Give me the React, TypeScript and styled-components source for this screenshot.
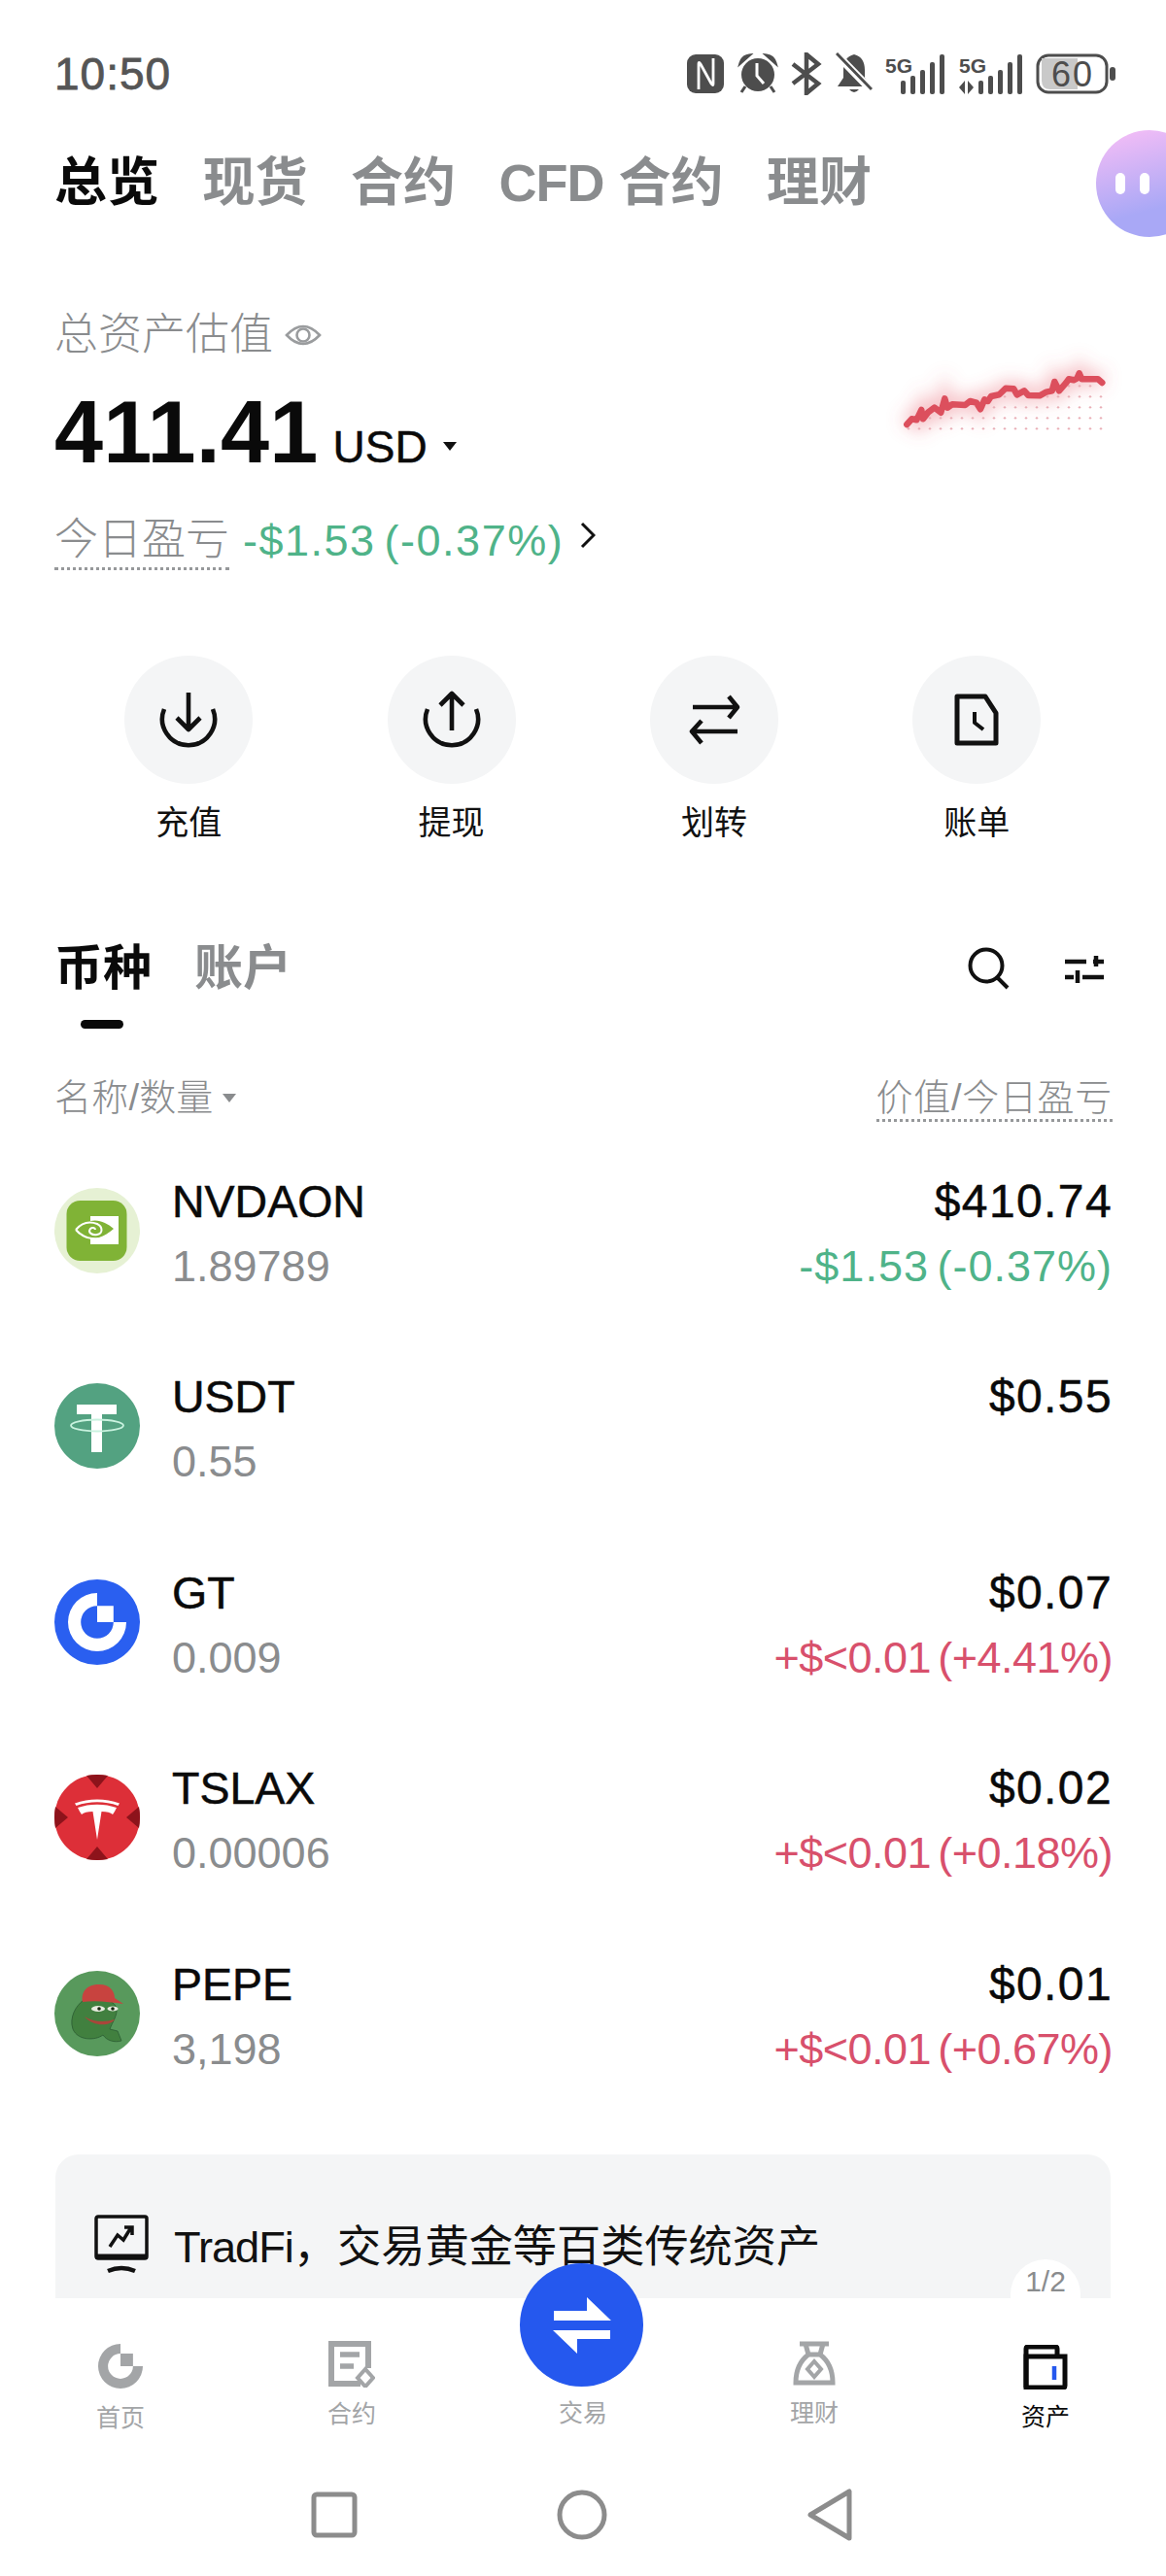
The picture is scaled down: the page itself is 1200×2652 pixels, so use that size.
import React from 'react';
import styled, { createGlobalStyle } from 'styled-components';

const FONT = '"Liberation Sans", "Noto Sans CJK SC", sans-serif';
const GRAY = '#8a8c8e';
const GREEN = '#4fb389';
const RED = '#d8506c';
const INK = '#0a0a0a';

const Global = createGlobalStyle`
  html, body { margin: 0; padding: 0; background: #fff; }
  body { font-family: ${FONT}; color: ${INK}; }
  * { box-sizing: border-box; }
`;

const Page = styled.div`
  width: 1200px; height: 2652px; overflow: hidden; position: relative;
  display: flex; flex-direction: column; background: #fff;
`;
const Scroll = styled.main`
  height: 2366px; overflow: hidden; position: relative;
  display: flex; flex-direction: column; flex: none;
`;

/* status bar */
const StatusBar = styled.div`
  height: 130px; padding: 22px 52px 0 56px; flex: none;
  display: flex; align-items: flex-start; justify-content: space-between;
`;
const Clock = styled.div`
  height: 108px; line-height: 108px; font-size: 46px; color: #555; letter-spacing: 1px;
  -webkit-text-stroke: 0.8px #555;
`;
const StatusIcons = styled.div`
  height: 108px; display: flex; align-items: center; gap: 13.5px; color: #4d4d4d;
`;

/* top tabs */
const TopTabs = styled.nav`
  height: 114px; flex: none; padding-left: 56px; position: relative;
  display: flex; align-items: center; gap: 44.5px;
`;
const TopTab = styled.div<{ $active?: boolean }>`
  font-size: 54px; font-weight: 700; line-height: 70px; white-space: nowrap; padding-top: 2px;
  color: ${p => (p.$active ? INK : GRAY)};
`;
const TabLatin = styled.span`
  letter-spacing: -1px;
`;
const Assistant = styled.div`
  position: absolute; left: 1128px; top: 4px; width: 110px; height: 110px; border-radius: 50%;
  background: linear-gradient(165deg, #f3bdf6 5%, #a9a8f6 70%);
  display: flex; align-items: center; padding-left: 20px; gap: 15px;
`;
const AssistantEye = styled.span`
  width: 10px; height: 22px; border-radius: 5px; background: #fff;
`;

/* summary */
const Summary = styled.section`
  margin-top: 60px; padding: 0 55px 0 56px; flex: none;
  display: flex; flex-direction: column;
`;
const LabelRow = styled.div`
  height: 78px; display: flex; align-items: center; gap: 12px; padding-top: 4px;
`;
const MutedLabel = styled.span`
  font-size: 45px; color: ${GRAY}; line-height: 60px; font-weight: 300;
`;
const AmountRow = styled.div`
  height: 126px; display: flex; justify-content: space-between; align-items: flex-start;
`;
const Amount = styled.div`
  display: flex; align-items: baseline; height: 126px; line-height: 126px;
`;
const AmountValue = styled.span`
  font-size: 90px; font-weight: 700; letter-spacing: 0.2px;
`;
const AmountUnit = styled.span`
  font-size: 46px; margin-left: 15px; -webkit-text-stroke: 0.5px ${INK}; padding-top: 2px;
`;
const Caret = styled.span<{ $size: number; $color: string; $gap: number }>`
  display: inline-block; align-self: center;
  margin-left: ${p => p.$gap}px;
  border-left: ${p => p.$size}px solid transparent;
  border-right: ${p => p.$size}px solid transparent;
  border-top: ${p => p.$size * 1.3}px solid ${p => p.$color};
`;
const AmountCaret = styled(Caret)`
  transform: translateY(14px);
`;
const Spark = styled.svg`
  margin-top: -19px; margin-right: -15px; flex: none; overflow: visible;
`;
const PnlRow = styled.div`
  margin-top: 19px; height: 60px; display: flex; align-items: center;
`;
const Dotted = styled.span`
  border-bottom: 3px dotted #96989a;
  display: inline-block;
`;
const PnlLabel = styled(Dotted)`
  font-size: 45px; color: ${GRAY}; line-height: 56px; font-weight: 300;
`;
const PnlValue = styled.span`
  font-size: 45px; color: ${GREEN}; margin-left: 14px; letter-spacing: 1.5px; word-spacing: -5px; line-height: 56px;
`;
const Chevron = styled.svg`
  margin-left: 17px; margin-top: -12px;
`;

/* actions */
const Actions = styled.section`
  margin-top: 88px; padding-left: 59px; flex: none;
  display: grid; grid-template-columns: repeat(4, 270.4px);
`;
const Action = styled.div`
  display: flex; flex-direction: column; align-items: center;
`;
const ActionCircle = styled.div`
  width: 132px; height: 132px; border-radius: 50%; background: #f4f5f6;
  display: flex; align-items: center; justify-content: center;
`;
const ActionLabel = styled.div`
  margin-top: 20px; font-size: 34px; line-height: 40px; color: #111;
`;

/* asset tabs */
const AssetTabs = styled.section`
  margin-top: 100px; height: 60px; padding: 0 63px 0 56px; flex: none;
  display: flex; align-items: center; gap: 44px;
`;
const AssetTab = styled.div<{ $active?: boolean }>`
  font-size: 50px; font-weight: 700; line-height: 60px;
  color: ${p => (p.$active ? INK : GRAY)};
`;
const AssetTools = styled.div`
  margin-left: auto; display: flex; align-items: center; gap: 55px;
`;
const TabMark = styled.div`
  margin: 23px 0 0 83px; width: 44px; height: 9px; border-radius: 5px; background: ${INK}; flex: none;
`;

/* list */
const ListHead = styled.div`
  margin-top: 41px; height: 60px; padding: 0 55px 0 56px; flex: none;
  display: flex; align-items: center; justify-content: space-between;
`;
const HeadLeft = styled.div`
  display: flex; align-items: center;
  font-size: 38px; color: ${GRAY}; line-height: 46px; font-weight: 300; letter-spacing: 0.2px;
`;
const HeadRight = styled(Dotted)`
  font-size: 38px; color: ${GRAY}; line-height: 44px; margin-top: 3px; font-weight: 300; letter-spacing: 0.7px;
`;
const List = styled.div`
  margin-top: 6px; display: flex; flex-direction: column; flex: none;
`;
const Row = styled.div`
  height: 201.5px; padding: 0 55px 0 56px;
  display: flex; align-items: center;
`;
const Coin = styled.svg`
  width: 88px; height: 88px; flex: none; margin-right: 33px;
`;
const RowCol = styled.div<{ $right?: boolean }>`
  display: flex; flex-direction: column; padding-top: 6px;
  ${p => (p.$right ? 'margin-left: auto; align-items: flex-end;' : '')}
`;
const Name = styled.div`
  font-size: 46.5px; line-height: 68px; height: 68px; -webkit-text-stroke: 0.5px ${INK};
`;
const Sub = styled.div`
  font-size: 45px; line-height: 66px; height: 66px; color: ${GRAY};
`;
const Value = styled.div`
  font-size: 48px; line-height: 68px; height: 68px; letter-spacing: 1.4px; -webkit-text-stroke: 0.5px ${INK};
`;
const Change = styled.div<{ $up?: boolean }>`
  font-size: 45px; line-height: 66px; height: 66px;
  letter-spacing: ${p => (p.$up ? '-0.5px' : '1px')};
  word-spacing: -5px;
  color: ${p => (p.$up ? RED : GREEN)};
`;

/* banner */
const Banner = styled.section`
  margin: 44.5px 57px 0; height: 300px; border-radius: 24px; background: #f4f5f6; flex: none;
  position: relative; padding: 62px 0 0 40px;
  display: flex; align-items: flex-start; gap: 26px;
`;
const BannerText = styled.div`
  font-size: 45.2px; line-height: 64px; color: #111; white-space: nowrap; padding-top: 2px;
`;
const BannerLatin = styled.span`
  letter-spacing: -1px;
`;
const Pager = styled.div`
  position: absolute; left: 983px; top: 108px; width: 72px; height: 40px; border-radius: 36px 36px 0 0;
  background: #fff; color: ${GRAY}; font-size: 30px; line-height: 46px; text-align: center;
`;

/* tab bar */
const TabBar = styled.nav`
  height: 166px; flex: none; background: #fff; padding: 0 5px;
  display: grid; grid-template-columns: repeat(5, 238px); justify-content: center;
`;
const TabItem = styled.div<{ $top: number }>`
  display: flex; flex-direction: column; align-items: center; padding-top: ${p => p.$top}px;
`;
const TabLabel = styled.div<{ $active?: boolean; $gap: number }>`
  margin-top: ${p => p.$gap}px; font-size: 25px; line-height: 30px;
  color: ${p => (p.$active ? INK : '#a3a5a7')};
`;
const TabSpacer = styled.div`
  height: 46px;
`;
const SwapButton = styled.div`
  position: absolute; left: 535px; top: 2330px; width: 127px; height: 127px; border-radius: 50%;
  background: #2558ee; display: flex; align-items: center; justify-content: center;
`;

/* system nav */
const SystemNav = styled.div`
  flex: 1; display: grid; grid-template-columns: repeat(3, 255px); justify-content: center;
  align-items: center; justify-items: center; padding: 0 0 6px 0; margin-left: -2px;
`;

const Eye = () => (
  <svg width="38" height="32" viewBox="0 0 38 32" fill="none" stroke="#9a9c9e" strokeWidth="2.6">
    <path d="M2 16 Q19 -2 36 16 Q19 34 2 16Z" />
    <circle cx="19" cy="16" r="6.5" />
  </svg>
);

const ActionIcon: React.FC<{ children: React.ReactNode }> = ({ children }) => (
  <svg width="64" height="64" viewBox="0 0 64 64" fill="none" stroke="#111" strokeWidth="4.6" strokeLinejoin="round">
    {children}
  </svg>
);

const rawSpark: [number, number][] = [
  [100, 942], [115, 925], [130, 928], [145, 897], [150, 925], [165, 905], [185, 890], [205, 905], [217, 862], [225, 890],
  [240, 880], [280, 882], [295, 870], [315, 875], [327, 895], [340, 865], [350, 870], [360, 855], [385, 850], [405, 830],
  [430, 832], [440, 850], [462, 838], [475, 852], [510, 853], [530, 842], [548, 838], [556, 810], [570, 838], [590, 815],
  [600, 802], [615, 805], [625, 800], [632, 784], [640, 802], [690, 802], [703, 813],
];
const toX = (x: number) => x / 3 - 20;
const toY = (y: number) => y / 3 - 240;
const sparkPoints = rawSpark.map(([x, y]) => `${toX(x).toFixed(1)},${toY(y).toFixed(1)}`).join(' ');
const lineAt = (x: number) => {
  for (let i = 1; i < rawSpark.length; i++) {
    if (x <= rawSpark[i][0]) return rawSpark[i][1];
  }
  return 810;
};
const sparkDots: { x: number; y: number }[] = [];
[823, 856, 889, 922, 955].forEach(y => {
  for (let x = 105; x <= 700; x += 33) {
    if (y > lineAt(x) + 14) sparkDots.push({ x: toX(x), y: toY(y) });
  }
});

const Sparkline = () => (
  <Spark width="240" height="120" viewBox="0 0 240 120" fill="none">
    <defs>
      <filter id="glow" x="-20%" y="-60%" width="140%" height="220%">
        <feGaussianBlur stdDeviation="9" />
      </filter>
    </defs>
    <polyline points={sparkPoints} stroke="#e8606c" strokeOpacity="0.42" strokeWidth="14" filter="url(#glow)" />
    {sparkDots.map(d => (
      <circle key={`${d.x}-${d.y}`} cx={d.x} cy={d.y} r="1.2" fill="#e9aeb6" />
    ))}
    <polyline points={sparkPoints} stroke="#dc4f5d" strokeWidth="6.5" strokeLinejoin="round" strokeLinecap="round" />
  </Spark>
);

const GateMark: React.FC<{ fill: string }> = ({ fill }) => (
  <path fill={fill} d="M50 0A50 50 0 1 0 100 50H78A28 28 0 1 1 50 22ZM50 22H78V50H50Z" />
);

const Nvidia = () => (
  <Coin viewBox="0 0 88 88">
    <circle cx="44" cy="44" r="44" fill="#e6f1d4" />
    <rect x="12.500" y="13" width="62" height="62" rx="14" fill="#80b336" />
    <path fill="#fff" d="M37 29H66V58H37V52C46 53 54 48 61 42C54 36 46 32 37 34Z" />
    <path fill="none" stroke="#fff" strokeWidth="2" d="M22 43C28 36 36 34 44 37C50 40 50 47 44 48C39 49 34 46 37 42C39 40 42 41 42 43" />
    <path fill="none" stroke="#fff" strokeWidth="2" d="M22 43C28 50 36 53 46 52C53 51 58 47 61 44" />
  </Coin>
);
const Usdt = () => (
  <Coin viewBox="0 0 88 88">
    <circle cx="44" cy="44" r="44" fill="#53a281" />
    <path fill="#fff" d="M23 22H64V32H49V71H38V32H23Z" />
    <ellipse cx="44" cy="43.500" rx="27" ry="6" fill="none" stroke="#c9f2df" strokeWidth="1.800" />
  </Coin>
);
const Gt = () => (
  <Coin viewBox="0 0 88 88">
    <circle cx="44" cy="44" r="44" fill="#2a5ff0" />
    <g transform="translate(14 14) scale(0.6)">
      <GateMark fill="#fff" />
    </g>
    <path fill="#2a5ff0" d="M44 29A15 15 0 1 0 59 44H44Z" />
  </Coin>
);
const Tesla = () => (
  <Coin viewBox="0 0 88 88">
    <circle cx="44" cy="44" r="44" fill="#dd2f38" />
    <path fill="#8d131b" d="M33 1Q44 -1 55 1L44 14ZM33 87Q44 89 55 87L44 74ZM1 33Q-1 44 1 55L14 44ZM87 33Q89 44 87 55L74 44Z" />
    <path fill="#fff" d="M44 67L39.500 38C34 38 30 39 28 41C26 38 25 36 24 34C36 29.500 52 29.500 64 34C63 36 62 38 60 41C58 39 54 38 48.500 38ZM21 29.500C36 24 52 24 67 29.500L65.500 32C52 27 36 27 22.500 32Z" />
  </Coin>
);
const Pepe = () => (
  <Coin viewBox="0 0 88 88">
    <circle cx="44" cy="44" r="44" fill="#58995c" />
    <path fill="#41803f" stroke="#2b5c32" strokeWidth="0.800" d="M30 30C42 26 60 28 64 38C65 46 60 52 57 60L65 62L69 72C62 74 54 72 50 66C42 72 24 72 19 60C15 48 22 36 30 30Z" />
    <path fill="#c8433f" d="M29 32C27 21 34 14 46 14C58 14 62 22 62 28L71 34C58 32 42 30 29 32Z" />
    <ellipse cx="45" cy="39" rx="7" ry="3" fill="#e8ece0" />
    <ellipse cx="60" cy="39" rx="5.500" ry="2.600" fill="#e8ece0" />
    <circle cx="46" cy="39" r="1.800" fill="#16260f" />
    <circle cx="60" cy="39" r="1.800" fill="#16260f" />
    <path fill="#a9463a" d="M31 47C40 53 52 53 62 50C58 57 40 58 31 47Z" />
  </Coin>
);

const coins = [
  { key: 'NVDAON', icon: <Nvidia />, qty: '1.89789', value: '$410.74', change: '-$1.53 (-0.37%)', up: false },
  { key: 'USDT', icon: <Usdt />, qty: '0.55', value: '$0.55' },
  { key: 'GT', icon: <Gt />, qty: '0.009', value: '$0.07', change: '+$<0.01 (+4.41%)', up: true },
  { key: 'TSLAX', icon: <Tesla />, qty: '0.00006', value: '$0.02', change: '+$<0.01 (+0.18%)', up: true },
  { key: 'PEPE', icon: <Pepe />, qty: '3,198', value: '$0.01', change: '+$<0.01 (+0.67%)', up: true },
];

const actions = [
  { label: '充值', icon: <><path d="M7 21A27 27 0 1 0 57 21" /><path d="M32 4V42M20 30L32 42L44 30" /></> },
  { label: '提现', icon: <><path d="M7 21A27 27 0 1 0 57 21" /><path d="M32 5V43M20 17L32 5L44 17" /></> },
  { label: '划转', icon: <><path d="M10 19H56M47 8L56 19L47 30" /><path d="M56 44H9M19 33L9 44L19 56" /></> },
  { label: '账单', icon: <><path d="M12 8H41L52 25V56H12Z" strokeWidth="5" /><path d="M30 24V35L39 42" strokeWidth="4" /></> },
];

const FiveG = () => (
  <text x="0" y="20" fontFamily="Liberation Sans" fontSize="21" fontWeight="700" fill="#4d4d4d">5G</text>
);

export default function App() {
  return (
    <Page>
      <Global />
      <Scroll>
        <StatusBar>
          <Clock>10:50</Clock>
          <StatusIcons>
            <svg width="38" height="40" viewBox="0 0 38 40">
              <rect width="38" height="40" rx="9" fill="#4d4d4d" />
              <path d="M12 36V10Q12 7 14 10L25 30Q27 33 27 30V4" fill="none" stroke="#fff" strokeWidth="2.800" />
            </svg>
            <svg width="42" height="42" viewBox="0 0 42 42">
              <circle cx="21" cy="22" r="17" fill="#4d4d4d" />
              <path d="M3 10Q5 3 12 2ZM39 10Q37 3 30 2ZM8 34L4 40M34 34L38 40" fill="#4d4d4d" stroke="#4d4d4d" strokeWidth="3" />
              <path d="M20 10V23L27 31" fill="none" stroke="#fff" strokeWidth="3" />
            </svg>
            <svg width="32" height="44" viewBox="0 0 32 44" fill="none" stroke="#4d4d4d" strokeWidth="4.500">
              <path d="M2 12L28 32L16 42V2L28 12L2 32" />
            </svg>
            <svg width="38" height="44" viewBox="0 0 38 44">
              <path fill="#4d4d4d" d="M19 2C27 4 30 10 30 18V26L36 35H2L8 26V18C8 10 11 4 19 2ZM14 38H24Q19 44 14 38Z" />
              <path d="M2 3L36 38" stroke="#fff" strokeWidth="8" />
              <path d="M1 1L37 38" stroke="#4d4d4d" strokeWidth="3" />
            </svg>
            <svg width="62" height="42" viewBox="0 0 62 42">
              <FiveG />
              <rect x="16" y="28" width="5" height="14" rx="2" fill="#4d4d4d" />
              <rect x="26" y="23" width="5" height="19" rx="2" fill="#4d4d4d" />
              <rect x="36" y="17" width="5" height="25" rx="2" fill="#4d4d4d" />
              <rect x="46" y="9" width="5" height="33" rx="2" fill="#4d4d4d" />
              <rect x="56" y="1" width="5" height="41" rx="2" fill="#4d4d4d" />
            </svg>
            <svg width="66" height="42" viewBox="0 0 66 42">
              <FiveG />
              <path d="M6 28V42L0 35ZM9 28L15 35L9 42Z" fill="#4d4d4d" />
              <rect x="20" y="28" width="5" height="14" rx="2" fill="#4d4d4d" />
              <rect x="30" y="23" width="5" height="19" rx="2" fill="#4d4d4d" />
              <rect x="40" y="17" width="5" height="25" rx="2" fill="#4d4d4d" />
              <rect x="50" y="9" width="5" height="33" rx="2" fill="#4d4d4d" />
              <rect x="60" y="1" width="5" height="41" rx="2" fill="#4d4d4d" />
            </svg>
            <svg width="82" height="42" viewBox="0 0 82 42">
              <rect x="2" y="2" width="71" height="38" rx="11" fill="#fff" stroke="#4d4d4d" strokeWidth="3" />
              <path d="M6 5H43V37H15Q6 37 6 28Z" fill="#c9c9c9" />
              <text x="38" y="34" textAnchor="middle" fontFamily="Liberation Sans" fontSize="36" letterSpacing="2" fill="#4d4d4d">60</text>
              <rect x="76" y="14" width="6" height="14" rx="3" fill="#4d4d4d" />
            </svg>
          </StatusIcons>
        </StatusBar>

        <TopTabs>
          <TopTab $active>总览</TopTab>
          <TopTab>现货</TopTab>
          <TopTab>合约</TopTab>
          <TopTab><TabLatin>CFD</TabLatin> 合约</TopTab>
          <TopTab>理财</TopTab>
          <Assistant>
            <AssistantEye />
            <AssistantEye />
          </Assistant>
        </TopTabs>

        <Summary>
          <LabelRow>
            <MutedLabel>总资产估值</MutedLabel>
            <Eye />
          </LabelRow>
          <AmountRow>
            <Amount>
              <AmountValue>411.41</AmountValue>
              <AmountUnit>USD</AmountUnit>
              <AmountCaret $size={7} $color="#111" $gap={16} />
            </Amount>
            <Sparkline />
          </AmountRow>
          <PnlRow>
            <PnlLabel>今日盈亏</PnlLabel>
            <PnlValue>-$1.53 (-0.37%)</PnlValue>
            <Chevron width="16" height="28" viewBox="0 0 16 28" fill="none" stroke="#111" strokeWidth="3">
              <path d="M2 2L14 14L2 26" />
            </Chevron>
          </PnlRow>
        </Summary>

        <Actions>
          {actions.map(a => (
            <Action key={a.label}>
              <ActionCircle>
                <ActionIcon>{a.icon}</ActionIcon>
              </ActionCircle>
              <ActionLabel>{a.label}</ActionLabel>
            </Action>
          ))}
        </Actions>

        <AssetTabs>
          <AssetTab $active>币种</AssetTab>
          <AssetTab>账户</AssetTab>
          <AssetTools>
            <svg width="44" height="44" viewBox="0 0 44 44" fill="none" stroke="#111" strokeWidth="4">
              <circle cx="19" cy="19" r="16.500" />
              <path d="M30 31L41 42" />
            </svg>
            <svg width="42" height="34" viewBox="0 0 42 34" fill="none" stroke="#111" strokeWidth="4.500">
              <path d="M1 10H23M33 4V15M30 10H41M1 26H10M14 19V32M19 26H41" />
            </svg>
          </AssetTools>
        </AssetTabs>
        <TabMark />

        <ListHead>
          <HeadLeft>
            名称/数量
            <Caret $size={7} $color={GRAY} $gap={9} />
          </HeadLeft>
          <HeadRight>价值/今日盈亏</HeadRight>
        </ListHead>

        <List>
          {coins.map(c => (
            <Row key={c.key}>
              {c.icon}
              <RowCol>
                <Name>{c.key}</Name>
                <Sub>{c.qty}</Sub>
              </RowCol>
              <RowCol $right>
                <Value>{c.value}</Value>
                {c.change ? <Change $up={c.up}>{c.change}</Change> : <Change>&nbsp;</Change>}
              </RowCol>
            </Row>
          ))}
        </List>

        <Banner>
          <svg width="56" height="64" viewBox="0 0 56 64" fill="none" stroke="#111">
            <rect x="2" y="2" width="52" height="43" strokeWidth="3.500" rx="2" />
            <path d="M1 43H55" strokeWidth="5" />
            <path d="M16 33L24 21L30 26L38 13M31 13H39V21" strokeWidth="3.500" />
            <path d="M14 58Q28 52 42 58" strokeWidth="4.500" />
          </svg>
          <BannerText><BannerLatin>TradFi</BannerLatin>，交易黄金等百类传统资产</BannerText>
          <Pager>1/2</Pager>
        </Banner>
      </Scroll>

      <TabBar>
        <TabItem $top={47}>
          <svg width="46" height="46" viewBox="0 0 100 100"><GateMark fill="#a3a5a7" /></svg>
          <TabLabel $gap={15}>首页</TabLabel>
        </TabItem>
        <TabItem $top={44}>
          <svg width="48" height="48" viewBox="0 0 48 48" fill="none" stroke="#a3a5a7">
            <path d="M33 44H3V3H41V28" strokeWidth="6" />
            <path d="M12 14H32M12 26H26" strokeWidth="5.500" />
            <path d="M38 29L46 38L38 47L30 38Z" strokeWidth="4" />
          </svg>
          <TabLabel $gap={12}>合约</TabLabel>
        </TabItem>
        <TabItem $top={46}>
          <TabSpacer />
          <TabLabel $gap={11}>交易</TabLabel>
        </TabItem>
        <TabItem $top={44}>
          <svg width="44" height="46" viewBox="0 0 44 46" fill="none" stroke="#a3a5a7" strokeWidth="5">
            <path d="M7 3H37M13 3L16 14C8 20 3 28 3 43H41C41 28 36 20 28 14L31 3M14 14H30" />
            <path d="M22 21L29 29L22 37L15 29Z" strokeWidth="4" />
          </svg>
          <TabLabel $gap={13}>理财</TabLabel>
        </TabItem>
        <TabItem $top={48}>
          <svg width="46" height="46" viewBox="0 0 46 46" fill="none" stroke={INK} strokeWidth="5">
            <path d="M3 44V4Q3 2 5 2H33Q35 2 35 4V12" />
            <path d="M3 12H43V42Q43 44 41 44H3Z" />
            <path d="M32 22V36" stroke="#2558ee" strokeWidth="4.500" />
          </svg>
          <TabLabel $gap={13} $active>资产</TabLabel>
        </TabItem>
      </TabBar>

      <SwapButton>
        <svg width="62" height="62" viewBox="0 0 62 62" fill="#fff">
          <path d="M2 16H36V2L61 26H2Z" />
          <path d="M60 36H26V60L1 36H60Z" />
          <path d="M60 36V45H26V36Z" />
        </svg>
      </SwapButton>

      <SystemNav>
        <svg width="48" height="48" viewBox="0 0 48 48" fill="none" stroke="#8c8c8c" strokeWidth="5" strokeLinejoin="round">
          <rect x="3" y="3" width="42" height="42" rx="3" />
        </svg>
        <svg width="52" height="52" viewBox="0 0 52 52" fill="none" stroke="#8c8c8c" strokeWidth="5">
          <circle cx="26" cy="26" r="23" />
        </svg>
        <svg width="46" height="54" viewBox="0 0 46 54" fill="none" stroke="#8c8c8c" strokeWidth="5" strokeLinejoin="round">
          <path d="M43 3V51L3 27Z" />
        </svg>
      </SystemNav>
    </Page>
  );
}
